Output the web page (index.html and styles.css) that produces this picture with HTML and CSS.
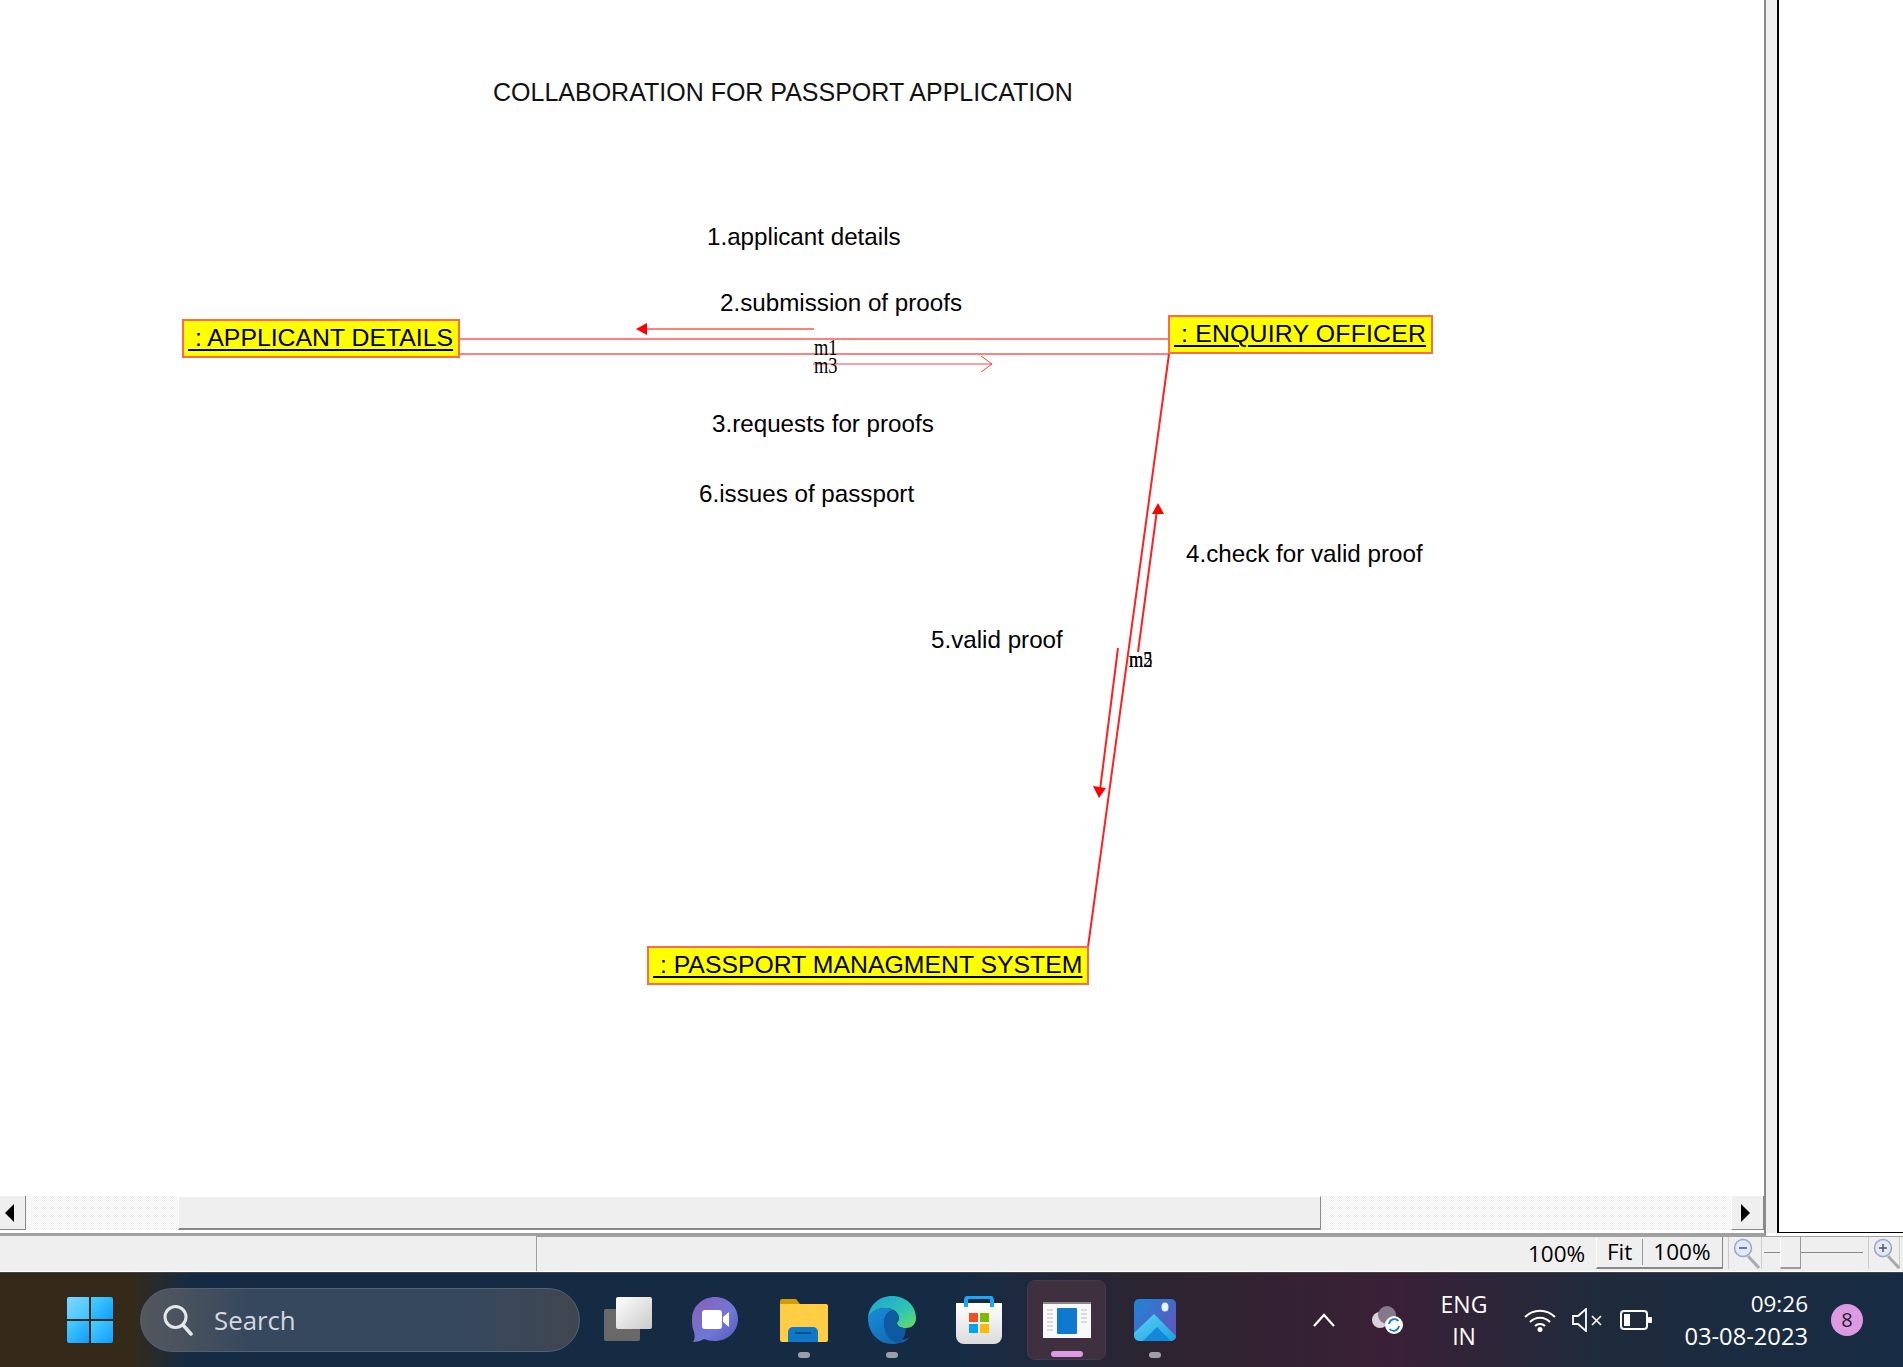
FILE: index.html
```html
<!DOCTYPE html>
<html lang="en">
<head>
    <meta charset="UTF-8">
    <title>Collaboration for passport application</title>
    <link rel="stylesheet" href="styles.css">
</head>
<body>
    <div class="workspace">
        <div class="doc-pane">
            <div class="canvas">
                <svg class="wires" width="1763" height="1196" viewBox="0 0 1763 1196">
                    <line class="link" x1="459" y1="339" x2="1169" y2="339"/>
                    <line class="link" x1="459" y1="354" x2="1169" y2="354"/>
                    <line class="msg" x1="1169" y1="354" x2="1088" y2="947"/>
                    <line class="link" x1="647" y1="329" x2="814" y2="329"/>
                    <polygon class="head" points="636,329 647,323 647,335"/>
                    <line class="open" x1="813" y1="364" x2="992" y2="364"/>
                    <polyline class="open" points="981,356 992,364 981,372"/>
                    <line class="msg" x1="1138" y1="652" x2="1157" y2="510"/>
                    <polygon class="head" points="1158,503 1152,514 1164,514"/>
                    <line class="msg" x1="1118" y1="648" x2="1100" y2="790"/>
                    <polygon class="head" points="1099,798 1093,786 1106,788"/>
                </svg>
                <div class="title">COLLABORATION FOR PASSPORT APPLICATION</div>

                <div class="node node-applicant"><u>&nbsp;: APPLICANT DETAILS</u></div>
                <div class="node node-officer"><u>&nbsp;: ENQUIRY OFFICER</u></div>
                <div class="node node-system"><u>&nbsp;: PASSPORT MANAGMENT SYSTEM</u></div>

                <div class="label label-1">1.applicant details</div>
                <div class="label label-2">2.submission of proofs</div>
                <div class="label label-3">3.requests for proofs</div>
                <div class="label label-6">6.issues of passport</div>
                <div class="label label-4">4.check for valid proof</div>
                <div class="label label-5">5.valid proof</div>

                <div class="tag tag-m1">m1</div>
                <div class="tag tag-m3">m3</div>
                <div class="tag tag-m2">m2</div>
                <div class="tag tag-m5">m5</div>
            </div>
            <div class="hscroll">
                <div class="scroll-btn">
                    <svg width="10" height="18" viewBox="0 0 10 18"><polygon points="9,0 9,18 0,9" fill="#000"/></svg>
                </div>
                <div class="track track-left"></div>
                <div class="thumb"></div>
                <div class="track"></div>
                <div class="scroll-btn scroll-btn-right">
                    <svg width="10" height="18" viewBox="0 0 10 18"><polygon points="1,0 1,18 10,9" fill="#000"/></svg>
                </div>
            </div>
        </div>
        <div class="splitter"></div>
        <div class="side-pane"></div>
    </div>

    <div class="statusbar">
        <div class="status-blank"></div>
        <div class="status-main">
            <span class="zoom-value">100%</span>
            <div class="fit-btn">
                <span>Fit</span>
                <i class="fit-sep"></i>
                <span>100%</span>
            </div>
            <div class="zoom-icon">
                <svg width="28" height="32" viewBox="0 0 28 32">
                    <line x1="15" y1="19" x2="26" y2="31" stroke="#aaa" stroke-width="3"/>
                    <circle cx="10" cy="11" r="8.5" fill="#dfe8f8" stroke="#9aa6bc" stroke-width="1.5"/>
                    <line x1="6" y1="11" x2="14" y2="11" stroke="#555" stroke-width="1.5"/>
                </svg>
            </div>
            <div class="slider">
                <i class="slider-line"></i>
                <i class="slider-thumb"></i>
            </div>
            <div class="zoom-icon">
                <svg width="28" height="32" viewBox="0 0 28 32">
                    <line x1="15" y1="19" x2="26" y2="31" stroke="#aaa" stroke-width="3"/>
                    <circle cx="10" cy="11" r="8.5" fill="#dfe8f8" stroke="#9aa6bc" stroke-width="1.5"/>
                    <line x1="6" y1="11" x2="14" y2="11" stroke="#555" stroke-width="1.5"/>
                    <line x1="10" y1="7" x2="10" y2="15" stroke="#555" stroke-width="1.5"/>
                </svg>
            </div>
        </div>
    </div>

    <div class="taskbar">
        <svg class="start" width="46" height="46" viewBox="0 0 46 46">
            <defs>
                <linearGradient id="winA" x1="0" y1="0" x2="1" y2="1">
                    <stop offset="0" stop-color="#7fd6ff"/><stop offset="1" stop-color="#3cc4ff"/>
                </linearGradient>
                <linearGradient id="winB" x1="0" y1="0" x2="1" y2="1">
                    <stop offset="0" stop-color="#4cd0ff"/><stop offset="1" stop-color="#0f9bff"/>
                </linearGradient>
            </defs>
            <path d="M2 0H22V22H0V2a2 2 0 0 1 2-2z" fill="url(#winA)"/>
            <path d="M24 0H44a2 2 0 0 1 2 2V22H24z" fill="url(#winB)"/>
            <path d="M0 24H22V46H2a2 2 0 0 1-2-2z" fill="url(#winB)"/>
            <path d="M24 24H46V44a2 2 0 0 1-2 2H24z" fill="url(#winB)"/>
        </svg>

        <div class="search">
            <svg width="30" height="32" viewBox="0 0 30 32">
                <circle cx="12.5" cy="13" r="10.5" fill="none" stroke="#e4e6ea" stroke-width="3"/>
                <line x1="20" y1="21" x2="28" y2="30" stroke="#e4e6ea" stroke-width="3.5" stroke-linecap="round"/>
            </svg>
            <span>Search</span>
        </div>

        <svg class="taskview" width="50" height="46" viewBox="0 0 50 46">
            <defs>
                <linearGradient id="tvFront" x1="0" y1="0" x2="1" y2="1">
                    <stop offset="0" stop-color="#ffffff"/><stop offset="1" stop-color="#c9c9c9"/>
                </linearGradient>
            </defs>
            <rect x="0" y="12" width="36" height="32" rx="2" fill="#696969"/>
            <rect x="12" y="0" width="36" height="32" rx="2" fill="url(#tvFront)"/>
        </svg>

        <div class="app app-teams">
            <svg width="46" height="46" viewBox="0 0 46 46">
                <defs>
                    <linearGradient id="teams" x1="0" y1="0" x2="1" y2="1">
                        <stop offset="0" stop-color="#8a5fb4"/><stop offset=".6" stop-color="#6f78d8"/><stop offset="1" stop-color="#5a55b5"/>
                    </linearGradient>
                </defs>
                <path d="M23 0C35 0 46 9 46 22S35 44 23 44c-4 0-8-1-11-2-3 2-7 3-11 3 2-3 2-6 1-10C0 31 0 26 0 22 0 9 11 0 23 0z" fill="url(#teams)"/>
                <rect x="10" y="13" width="20" height="19" rx="3" fill="#fff"/>
                <path d="M31 20l6-5v15l-6-5z" fill="#fff"/>
            </svg>
        </div>
        <div class="app app-folder">
            <svg width="48" height="44" viewBox="0 0 48 44">
                <path d="M0 3a2 2 0 0 1 2-2h14l4 5H0z" fill="#d69b00"/>
                <path d="M0 6h46a2 2 0 0 1 2 2v34a2 2 0 0 1-2 2H2a2 2 0 0 1-2-2z" fill="#ffce44"/>
                <path d="M8 44V34a5 5 0 0 1 5-5h20a5 5 0 0 1 5 5v10z" fill="#0f78c8"/>
                <line x1="15" y1="35" x2="31" y2="35" stroke="#0a4f8a" stroke-width="2"/>
            </svg>
            <i class="dot"></i>
        </div>
        <div class="app app-edge">
            <svg width="48" height="48" viewBox="0 0 48 48">
                <defs>
                    <linearGradient id="edgeTop" x1="0" y1="0" x2="1" y2="1">
                        <stop offset="0" stop-color="#1f9fd8"/><stop offset=".6" stop-color="#2fc6b0"/><stop offset="1" stop-color="#6fdc5c"/>
                    </linearGradient>
                    <linearGradient id="edgeLow" x1="0" y1="0" x2="1" y2="1">
                        <stop offset="0" stop-color="#1a8fdc"/><stop offset="1" stop-color="#0f5fa8"/>
                    </linearGradient>
                </defs>
                <path d="M0 22C1 9 11 0 24 0c14 0 24 10 24 22 0 6-4 10-10 10-5 0-9-2-9-5 0-1 2-2 2-5 0-5-6-10-13-10C10 12 3 15 0 22z" fill="url(#edgeTop)"/>
                <path d="M0 22c3-7 10-10 18-10 3 0 6 1 8 2-6 1-10 6-10 13 0 9 7 16 15 17 5 0 9-1 11-3-4 5-11 7-18 7C10 48 0 36 0 22z" fill="url(#edgeLow)"/>
                <path d="M26 14c3 2 5 5 5 8 0 3-2 4-2 5 0 3 4 5 9 5-1 5-1 11-7 15-8-1-15-8-15-20 0-7 4-12 10-13z" fill="#0e5aa0"/>
            </svg>
            <i class="dot"></i>
        </div>
        <div class="app app-store">
            <svg width="46" height="48" viewBox="0 0 46 48">
                <defs>
                    <linearGradient id="bag" x1="0" y1="0" x2="0" y2="1">
                        <stop offset="0" stop-color="#ffffff"/><stop offset="1" stop-color="#dcdcdc"/>
                    </linearGradient>
                </defs>
                <path d="M0 7h46v33a8 8 0 0 1-8 8H8a8 8 0 0 1-8-8z" fill="url(#bag)"/>
                <path d="M10 11V4a3 3 0 0 1 3-3h20a3 3 0 0 1 3 3v7" fill="none" stroke="#1ea7f0" stroke-width="4"/>
                <rect x="13" y="17" width="9" height="9" fill="#f25022"/>
                <rect x="24" y="17" width="9" height="9" fill="#7fba00"/>
                <rect x="13" y="28" width="9" height="9" fill="#00a4ef"/>
                <rect x="24" y="28" width="9" height="9" fill="#ffb900"/>
            </svg>
        </div>
        <div class="app app-current">
            <svg width="48" height="36" viewBox="0 0 48 36">
                <rect width="48" height="36" fill="#f8f8f8"/>
                <rect width="48" height="2" fill="#8a8a8a"/>
                <rect x="14" y="6" width="20" height="26" rx="1" fill="#0f79cf"/>
                <g stroke="#bdbdbd" stroke-width="1">
                    <line x1="4" y1="8" x2="10" y2="8"/><line x1="4" y1="12" x2="10" y2="12"/><line x1="4" y1="16" x2="10" y2="16"/>
                    <line x1="4" y1="20" x2="10" y2="20"/><line x1="4" y1="24" x2="10" y2="24"/><line x1="4" y1="28" x2="10" y2="28"/>
                    <line x1="38" y1="8" x2="44" y2="8"/><line x1="38" y1="12" x2="44" y2="12"/><line x1="38" y1="16" x2="44" y2="16"/>
                    <line x1="38" y1="20" x2="44" y2="20"/>
                </g>
            </svg>
            <i class="dot dot-current"></i>
        </div>
        <div class="app app-photos">
            <svg width="42" height="42" viewBox="0 0 42 42">
                <defs>
                    <linearGradient id="sky" x1="0" y1="0" x2="1" y2="1">
                        <stop offset="0" stop-color="#1b86d8"/><stop offset="1" stop-color="#6e4fb8"/>
                    </linearGradient>
                    <linearGradient id="hill" x1="0" y1="0" x2="1" y2="1">
                        <stop offset="0" stop-color="#5ad5f7"/><stop offset="1" stop-color="#1c9fe0"/>
                    </linearGradient>
                </defs>
                <rect width="42" height="42" rx="5" fill="url(#sky)"/>
                <ellipse cx="31" cy="8" rx="3.5" ry="4.5" fill="#e8f2fb"/>
                <path d="M0 34L20 15l22 22v0a5 5 0 0 1-5 5H6a6 6 0 0 1-6-6z" fill="url(#hill)"/>
                <path d="M9 42l14-14 14 14z" fill="#1388d8"/>
            </svg>
            <i class="dot dot-grey"></i>
        </div>

        <div class="tray">
            <svg class="chevron" width="22" height="14" viewBox="0 0 22 14">
                <polyline points="1,13 11,2 21,13" fill="none" stroke="#fff" stroke-width="2.2"/>
            </svg>
            <svg class="cloud" width="32" height="28" viewBox="0 0 32 28">
                <circle cx="8" cy="14" r="8" fill="#d9d3d9"/>
                <circle cx="15" cy="9" r="9" fill="#85788a"/>
                <circle cx="22" cy="19" r="9" fill="#fff"/>
                <path d="M17 18a5.5 5.5 0 0 1 9.500-3M27 20a5.500 5.500 0 0 1-9.500 3" fill="none" stroke="#1478cc" stroke-width="1.800"/>
            </svg>
            <div class="lang"><span>ENG</span><span>IN</span></div>
            <svg class="wifi" width="32" height="24" viewBox="0 0 32 24">
                <path d="M1 9a21 21 0 0 1 30 0M6 14a14 14 0 0 1 20 0M11 18a7 7 0 0 1 10 0" fill="none" stroke="#fff" stroke-width="2"/>
                <circle cx="16" cy="21.500" r="2.500" fill="#fff"/>
            </svg>
            <svg class="speaker" width="32" height="24" viewBox="0 0 32 24">
                <path d="M1 8h5l8-7v22l-8-7H1z" fill="none" stroke="#fff" stroke-width="1.800"/>
                <path d="M20 8l9 9M29 8l-9 9" stroke="#fff" stroke-width="1.600"/>
            </svg>
            <svg class="battery" width="32" height="20" viewBox="0 0 32 20">
                <rect x="1" y="1" width="26" height="18" rx="3" fill="none" stroke="#fff" stroke-width="2"/>
                <rect x="4" y="4" width="6" height="12" fill="#fff"/>
                <rect x="28" y="7" width="4" height="6" rx="1" fill="#fff"/>
            </svg>
            <div class="clock"><span class="clock-time">09:26</span><span>03-08-2023</span></div>
            <div class="badge">8</div>
        </div>
    </div>
</body>
</html>
```

FILE: styles.css
```css
html, body {
    margin: 0;
    padding: 0;
    height: 100%;
    overflow: hidden;
}
body {
    display: flex;
    flex-direction: column;
    height: 1367px;
    background: #fff;
    font-family: "Liberation Sans", Arial, sans-serif;
    color: #000;
}
.workspace {
    display: flex;
    height: 1236px;
    flex: none;
}
.doc-pane {
    width: 1764px;
    display: flex;
    flex-direction: column;
    border-right: 2px solid #8a8a8a;
    border-bottom: 3px solid #a0a0a0;
    box-sizing: content-box;
    height: 1233px;
}
.canvas {
    position: relative;
    height: 1196px;
    flex: none;
    background: #fff;
    overflow: hidden;
}
.wires {
    position: absolute;
    left: 0;
    top: 0;
}
.link {
    stroke: #ff8080;
    stroke-width: 2;
}
.msg {
    stroke: #ff2020;
    stroke-width: 2;
}
.open {
    stroke: #ff4040;
    stroke-width: 1;
    fill: none;
}
.head {
    fill: #ff0000;
}
.title {
    position: absolute;
    left: 493px;
    top: 79px;
    font-size: 25px;
    line-height: 27px;
    white-space: nowrap;
    color: #111;
}
.node {
    position: absolute;
    box-sizing: border-box;
    background: #ffff00;
    border: 2px solid #ff6a4a;
    height: 39px;
    padding: 3px 0 0 4px;
    font-size: 24.8px;
    line-height: 28px;
    white-space: nowrap;
}
.node u {
    text-decoration-thickness: 2px;
    text-underline-offset: 3px;
}
.node-applicant {
    left: 182px;
    top: 319px;
    width: 278px;
}
.node-officer {
    left: 1168px;
    top: 315px;
    width: 265px;
    padding-top: 3px;
    letter-spacing: .2px;
}
.node-system {
    left: 647px;
    top: 946px;
    width: 442px;
}
.label {
    position: absolute;
    font-size: 24.2px;
    line-height: 28px;
    white-space: nowrap;
}
.label-1 { left: 707px; top: 223px; }
.label-2 { left: 720px; top: 289px; }
.label-3 { left: 712px; top: 410px; }
.label-6 { left: 699px; top: 480px; }
.label-4 { left: 1186px; top: 540px; }
.label-5 { left: 931px; top: 626px; }
.tag {
    position: absolute;
    font-family: "Liberation Serif", serif;
    font-size: 23px;
    line-height: 16px;
    white-space: nowrap;
    transform: scaleX(.8);
    transform-origin: left top;
}
.tag-m1 { left: 814px; top: 340px; }
.tag-m3 { left: 814px; top: 358px; }
.tag-m2 { left: 1129px; top: 652px; }
.tag-m5 { left: 1129px; top: 652px; }

.hscroll {
    display: flex;
    height: 34px;
    margin-top: 0;
    flex: none;
    border-bottom: 1px solid #fff;
}
.scroll-btn {
    width: 26px;
    flex: none;
    display: flex;
    align-items: center;
    padding-right: 5px;
    justify-content: center;
    background: #efefef;
    border-right: 1px solid #888;
    border-bottom: 1px solid #888;
    box-sizing: border-box;
}
.scroll-btn-right {
    width: 33px;
    border-left: 1px solid #fff;
}
.track {
    flex: 1;
    background: repeating-conic-gradient(#fff 0 25%, #efefef 0 50%) 0 0 / 2px 2px;
}
.track-left {
    flex: none;
    width: 152px;
}
.thumb {
    width: 1143px;
    flex: none;
    background: #efefef;
    border-left: 1px solid #fff;
    border-top: 1px solid #fff;
    border-right: 1px solid #888;
    border-bottom: 2px solid #888;
    box-sizing: border-box;
}
.splitter {
    width: 11px;
    background: #efefef;
    border-right: 2px solid #000;
    height: 1233px;
    flex: none;
}
.side-pane {
    flex: 1;
    height: 1232px;
    background: #fff;
    border-bottom: 1px solid #000;
}

.statusbar {
    display: flex;
    height: 35px;
    flex: none;
    background: #efefef;
    border-bottom: 1px solid #fff;
    box-sizing: content-box;
    font-family: "Open Sans", sans-serif;
    font-size: 22.5px;
}
.status-blank {
    width: 537px;
    flex: none;
    border-right: 1px solid #a0a0a0;
    box-sizing: border-box;
}
.status-main {
    flex: 1;
    display: flex;
    align-items: stretch;
    border-top: 1px solid #a0a0a0;
}
.zoom-value {
    margin-left: 991px;
    width: 68px;
    line-height: 33px;
}
.fit-btn {
    width: 127px;
    height: 32px;
    box-sizing: border-box;
    display: flex;
    align-items: center;
    padding-left: 10px;
    line-height: 30px;
    border-bottom: 2px solid #888;
    border-right: 1px solid #888;
    border-left: 1px solid #fff;
}
.fit-sep {
    width: 1px;
    height: 26px;
    background: #999;
    margin: 0 10px;
}
.zoom-icon {
    width: 34px;
    height: 32px;
    flex: none;
    box-sizing: border-box;
    padding: 0 0 0 4px;
    margin-left: 5px;
    border-right: 1px solid #ccc;
    border-left: 1px solid #ccc;
}
.zoom-icon:last-child {
    margin-left: 3px;
    width: 32px;
}
.slider {
    position: relative;
    width: 103px;
    height: 32px;
    flex: none;
}
.slider-line {
    display: block;
    height: 1px;
    background: #888;
    margin: 15px 2px 0;
}
.slider-thumb {
    position: absolute;
    left: 18px;
    top: 0;
    width: 21px;
    height: 32px;
    box-sizing: border-box;
    background: #efefef;
    border-left: 1px solid #fff;
    border-right: 1px solid #999;
    border-bottom: 2px solid #999;
}

.taskbar {
    flex: 1;
    display: flex;
    align-items: center;
    position: relative;
    border-top: 1px solid #444;
    box-sizing: border-box;
    background: linear-gradient(90deg, #352a19 0, #352a19 130px, #152b44 190px, #152b44 960px, #2c2430 1150px, #3a2036 1390px, #1f2b3c 1600px, #172c44 1903px);
    color: #fff;
    font-family: "Open Sans", sans-serif;
}
.start {
    margin-left: 67px;
    flex: none;
}
.search {
    width: 440px;
    height: 64px;
    margin-left: 27px;
    box-sizing: border-box;
    flex: none;
    display: flex;
    align-items: center;
    gap: 21px;
    padding-left: 22px;
    border-radius: 32px;
    border: 1px solid #52606f;
    background: linear-gradient(90deg, #54585e 0, #36485e 25%, #36485e 75%, #40464f 100%);
    font-size: 25.8px;
    color: #d4d8dd;
}
.taskview {
    margin-left: 24px;
    flex: none;
}
.app {
    position: relative;
    flex: none;
    width: 72px;
    height: 80px;
    display: flex;
    align-items: center;
    justify-content: center;
    margin-left: 16px;
    padding-bottom: 0;
}
.app-teams {
    margin-left: 25px;
}
.app-folder {
    margin-left: 17px;
}
.app-edge {
    margin-left: 16px;
}
.app-store {
    margin-left: 15px;
}
.app-current {
    width: 79px;
    margin-left: 12px;
    box-sizing: border-box;
    border-radius: 8px;
    background: #3e303e;
    border: 1px solid #483a48;
}
.app-photos {
    margin-left: 13px;
}
.dot {
    position: absolute;
    left: 50%;
    bottom: 2px;
    width: 12px;
    height: 6px;
    margin-left: -6px;
    border-radius: 3px;
    background: #9aa0a8;
}
.dot-current {
    width: 32px;
    margin-left: -16px;
    background: #dd9ae2;
}
.dot-grey {
    background: #a0a0a4;
}
.tray {
    position: absolute;
    left: 1313px;
    right: 0;
    top: 0;
    bottom: 0;
    display: flex;
    align-items: center;
}
.chevron {
    flex: none;
}
.cloud {
    margin-left: 37px;
    flex: none;
}
.lang {
    width: 46px;
    margin-left: 37px;
    display: flex;
    flex-direction: column;
    align-items: center;
    font-size: 23px;
    line-height: 32px;
}
.wifi {
    margin-left: 37px;
    flex: none;
}
.speaker {
    margin-left: 16px;
    flex: none;
}
.battery {
    margin-left: 16px;
    flex: none;
}
.clock {
    width: 156px;
    display: flex;
    flex-direction: column;
    align-items: flex-end;
    font-size: 23.7px;
    line-height: 32px;
}
.clock-time {
    font-size: 22.5px;
}
.badge {
    width: 32px;
    height: 32px;
    margin-left: 23px;
    flex: none;
    border-radius: 50%;
    background: #dd9ae2;
    color: #222;
    font-size: 20px;
    line-height: 32px;
    text-align: center;
}
```
